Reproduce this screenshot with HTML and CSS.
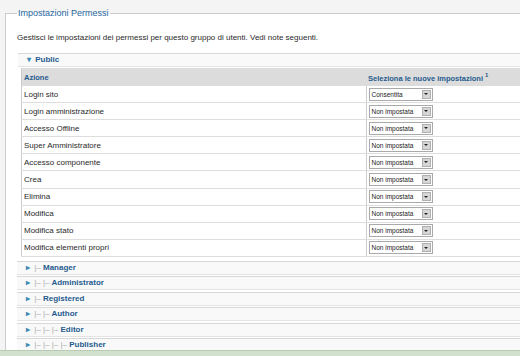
FILE: index.html
```html
<!DOCTYPE html>
<html lang="it">
<head>
  <meta charset="UTF-8">
  <title>Impostazioni Permessi</title>
  <link rel="stylesheet" href="styles.css">
</head>
<body>

<fieldset class="perms">
  <legend>Impostazioni Permessi</legend>
  <p class="intro">Gestisci le impostazioni dei permessi per questo gruppo di utenti. Vedi note seguenti.</p>

  <div class="group open">
    <div class="group-head"><span class="tri">&#9662;</span> Public</div>
    <table class="rules">
      <thead>
        <tr><th class="act">Azione</th><th>Seleziona le nuove impostazioni <sup>1</sup></th></tr>
      </thead>
      <tbody>
        <tr><td>Login sito</td><td><span class="sel">Consentita<i></i></span></td></tr>
        <tr><td>Login amministrazione</td><td><span class="sel">Non impostata<i></i></span></td></tr>
        <tr><td>Accesso Offline</td><td><span class="sel">Non impostata<i></i></span></td></tr>
        <tr><td>Super Amministratore</td><td><span class="sel">Non impostata<i></i></span></td></tr>
        <tr><td>Accesso componente</td><td><span class="sel">Non impostata<i></i></span></td></tr>
        <tr><td>Crea</td><td><span class="sel">Non impostata<i></i></span></td></tr>
        <tr><td>Elimina</td><td><span class="sel">Non impostata<i></i></span></td></tr>
        <tr><td>Modifica</td><td><span class="sel">Non impostata<i></i></span></td></tr>
        <tr><td>Modifica stato</td><td><span class="sel">Non impostata<i></i></span></td></tr>
        <tr><td>Modifica elementi propri</td><td><span class="sel">Non impostata<i></i></span></td></tr>
      </tbody>
    </table>
  </div>

  <div class="group"><div class="group-head"><span class="tri">&#9656;</span> <span class="lvl">|&ndash;</span> Manager</div></div>
  <div class="group"><div class="group-head"><span class="tri">&#9656;</span> <span class="lvl">|&ndash; |&ndash;</span> Administrator</div></div>
  <div class="group"><div class="group-head"><span class="tri">&#9656;</span> <span class="lvl">|&ndash;</span> Registered</div></div>
  <div class="group"><div class="group-head"><span class="tri">&#9656;</span> <span class="lvl">|&ndash; |&ndash;</span> Author</div></div>
  <div class="group"><div class="group-head"><span class="tri">&#9656;</span> <span class="lvl">|&ndash; |&ndash; |&ndash;</span> Editor</div></div>
  <div class="group"><div class="group-head"><span class="tri">&#9656;</span> <span class="lvl">|&ndash; |&ndash; |&ndash; |&ndash;</span> Publisher</div></div>
</fieldset>

<div class="statusbar"></div>

</body>
</html>
```

FILE: styles.css
```css
body {
  margin: 0;
  background: #f4f4f4;
  font: 8px "Liberation Sans", Arial, sans-serif;
  color: #2a2a2a;
  overflow: hidden;
}
.perms {
  width: 560px;
  margin: 8px 0 0 5px;
  padding: 0 0 20px 11px;
  border: 1px solid #ccc;
  background: #fff;
}
.perms legend {
  padding: 0 1px;
  font-size: 9px;
  color: #2767a0;
}
.intro { margin: 15px 0 11px; }

.group-head {
  border-top: 1px solid #d8d8d8;
  border-bottom: 1px solid #e4e4e4;
  background: #f9f9f9;
  line-height: 12px;
  padding-left: 9px;
  font-weight: bold;
  color: #1f5b8e;
}
.group { margin-top: 1.5px; }
.group.open .group-head { margin-left: 1px; }
.tri { color: #3a8ab5; font-size: 8px; margin-right: 2px; }
.lvl { color: #aaa; font-weight: normal; }

.rules {
  width: 546px;
  margin: 1px 0 4px 4px;
  border-collapse: collapse;
  border-left: 1px solid #ccc;
}
.rules th {
  background: #dcdcdc;
  height: 18px;
  padding: 0 2px;
  text-align: left;
  color: #1f5b8e;
  font-size: 7.5px;
}
.rules th.act { width: 340px; }
.rules sup { font-size: 6px; vertical-align: 4px; }
.rules td {
  height: 16.1px;
  padding: 0 2px;
  border-bottom: 1px solid #ddd;
}
.rules td + td { border-left: 1px solid #ccc; }

.sel {
  display: inline-flex;
  align-items: center;
  justify-content: space-between;
  width: 60px;
  height: 11px;
  padding-left: 2px;
  border: 1px solid #aaa;
  background: #fff;
  font-size: 6.5px;
  color: #222;
}
.sel i {
  width: 9px;
  height: 9px;
  margin-right: 1px;
  background: #d6d6d6;
  border: 1px solid #b0b0b0;
  box-sizing: border-box;
  position: relative;
}
.sel i::after {
  content: "";
  position: absolute;
  left: 1.5px;
  top: 2.5px;
  border: 2px solid transparent;
  border-top: 2px solid #222;
}

.statusbar {
  position: fixed;
  left: 0;
  right: 0;
  bottom: 0;
  height: 5px;
  background: #d2e1cd;
  border-top: 1px solid #b9cbb3;
}
```
